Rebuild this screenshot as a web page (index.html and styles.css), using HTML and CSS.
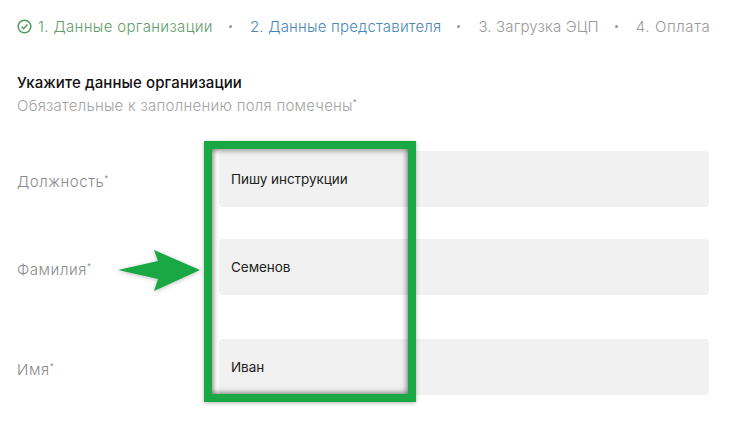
FILE: index.html
```
<!DOCTYPE html>
<html lang="ru">
<head>
<meta charset="utf-8">
<title>Данные организации</title>
<link rel="stylesheet" href="styles.css">
</head>
<body>
<main class="page">
  <nav class="steps">
    <span class="step step-done">
      <svg class="check" viewBox="0 0 14 14" width="15" height="15" aria-hidden="true">
        <circle cx="7" cy="7" r="5.9" fill="none" stroke="#4f9a5a" stroke-width="1.4"/>
        <path d="M4.3 7.2 6.2 9 9.8 5.2" fill="none" stroke="#4f9a5a" stroke-width="1.4"/>
      </svg>
      1. Данные организации
    </span>
    <i class="dot"></i>
    <span class="step step-active">2. Данные представителя</span>
    <i class="dot"></i>
    <span class="step step-third">3. Загрузка ЭЦП</span>
    <i class="dot"></i>
    <span class="step step-last">4. Оплата</span>
  </nav>
  <h1 class="title">Укажите данные организации</h1>
  <p class="hint">Обязательные к заполнению поля помечены<sup>*</sup></p>
  <form class="form">
    <div class="row">
      <label class="label">Должность<sup>*</sup></label>
      <div class="field">Пишу инструкции</div>
    </div>
    <div class="row">
      <label class="label">Фамилия<sup>*</sup></label>
      <div class="field">Семенов</div>
    </div>
    <div class="row row-last">
      <label class="label">Имя<sup>*</sup></label>
      <div class="field">Иван</div>
    </div>
  </form>
</main>
<div class="highlight"></div>
<svg class="arrow" viewBox="0 0 90 46" width="90" height="46" aria-hidden="true">
  <path d="M0 22 L40 13 L36 2 L82 22 L36 43 L40 31 Z" fill="#1aa845"/>
</svg>
</body>
</html>
```
FILE: styles.css
```
* { box-sizing: border-box; }
html, body { margin: 0; height: 100%; overflow: hidden; background: #fff; }
body { font-family: "Inter", "Noto Sans", sans-serif; position: relative; }
.page { padding: 17px 0 0 17px; }
.steps { display: flex; align-items: center; height: 18px; font-size: 15px; font-weight: 300; color: #9a9a9a; white-space: nowrap; letter-spacing: 0.2px; }
.step { display: inline-flex; align-items: center; gap: 6px; }
.step-done { color: #5f9e6a; letter-spacing: 0.35px; }
.step-active { color: #4a88bb; }
.step-third { letter-spacing: 0.15px; }
.step-last { letter-spacing: 0.6px; }
.check { flex: none; }
.dot { width: 3px; height: 3px; border-radius: 50%; background: #8a9a9a; margin: 0 18px 0 16px; flex: none; }
.title { margin: 39px 0 0; font-size: 15px; line-height: 18px; font-weight: 500; color: #111; letter-spacing: 0.1px; }
.hint { margin: 5px 0 0; font-size: 15px; line-height: 18px; font-weight: 300; color: #a3a3a3; letter-spacing: 0.25px; }
sup { font-size: 8px; line-height: 0; vertical-align: 6px; color: #777; }
.form { margin-top: 36px; display: flex; flex-direction: column; padding-right: 20px; }
.row { display: flex; align-items: center; height: 56px; margin-bottom: 32px; }
.row:nth-child(2) { margin-bottom: 44px; }
.label { width: 202px; flex: none; font-size: 15px; font-weight: 300; color: #8a8a8a; padding-top: 5px; letter-spacing: 0.55px; }
.field { flex: 1; height: 56px; display: flex; align-items: center; padding-left: 12px; background: #f1f1f1; border-radius: 4px; font-size: 13.5px; color: #222; letter-spacing: -0.05px; }
.highlight { position: absolute; left: 204px; top: 141px; width: 212px; height: 261px; border: 8px solid #1aa845; box-shadow: 0 1px 4px rgba(0,0,0,.3), inset 0 0 6px rgba(0,0,0,.7); }
.arrow { position: absolute; left: 118px; top: 248px; filter: drop-shadow(0 1px 2px rgba(0,0,0,.25)); }
```
